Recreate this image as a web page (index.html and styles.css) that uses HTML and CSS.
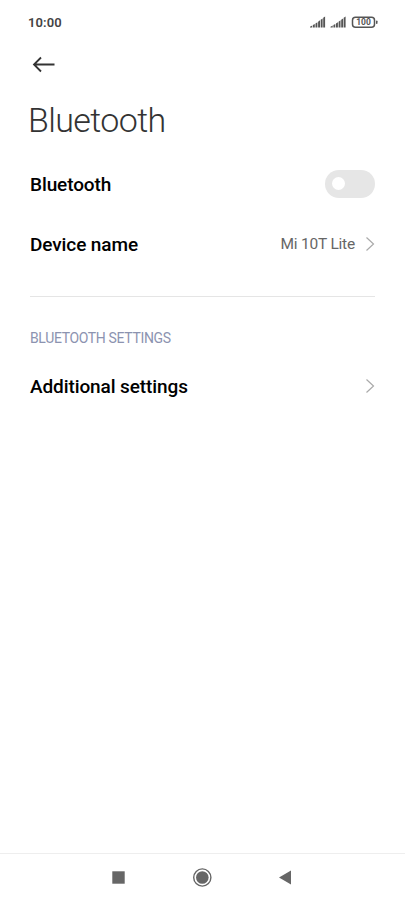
FILE: index.html
```html
<!DOCTYPE html>
<html lang="en">
<head>
<meta charset="utf-8">
<title>Bluetooth</title>
<link rel="stylesheet" href="styles.css">
</head>
<body>
<header class="status">
  <span class="time">10:00</span>
  <svg class="indicators" width="70" height="14" viewBox="0 0 70 14">
    <g fill="#555">
      <path d="M1 12.500v-.7l2.200-1.300v2zM3.900 10.100l1.900-1.100v3.500H3.900zM6.500 8.500l1.900-1.300v5.300H6.500zM9.100 6.700 11 5.300v7.200H9.100zM11.700 4.800l1.900-1.400v9.100h-1.900zM14.200 2.800l1.900-1.300v11h-1.900z"/>
      <path transform="translate(20.500)" d="M1 12.500v-.7l2.200-1.300v2zM3.900 10.100l1.900-1.100v3.500H3.900zM6.500 8.500l1.900-1.300v5.300H6.500zM9.100 6.700 11 5.300v7.200H9.100zM11.700 4.800l1.900-1.400v9.100h-1.900zM14.200 2.800l1.900-1.300v11h-1.900z"/>
      <rect x="67" y="5.500" width="1.500" height="3.500" rx=".7"/>
    </g>
    <rect x="43.500" y="2.200" width="22" height="10.100" rx="3" fill="none" stroke="#555" stroke-width="1.500"/>
    <text class="level" x="54.500" y="10.400" text-anchor="middle">100</text>
  </svg>
</header>
<nav class="toolbar">
  <svg width="24" height="18" viewBox="0 0 24 18" fill="none" stroke="#333" stroke-width="1.800"><path d="M2 9.500H22.500M9 2.500 2 9.500 9 16.500"/></svg>
</nav>
<main class="content">
  <h1 class="title">Bluetooth</h1>
  <section class="group">
    <div class="row"><span class="label">Bluetooth</span><span class="switch"></span></div>
    <div class="row"><span class="label">Device name</span><span class="value">Mi 10T Lite</span>
      <svg class="chevron" width="10" height="16" viewBox="0 0 10 16"><path d="M1.500 1.500 8.500 8l-7 6.500"/></svg></div>
  </section>
  <section class="group settings">
    <h2 class="heading">BLUETOOTH SETTINGS</h2>
    <div class="row"><span class="label">Additional settings</span>
      <svg class="chevron" width="10" height="16" viewBox="0 0 10 16"><path d="M1.500 1.500 8.500 8l-7 6.500"/></svg></div>
  </section>
</main>
<footer class="navbar">
  <svg width="405" height="48" viewBox="0 0 405 48" fill="#666">
    <rect x="112.300" y="17.300" width="12.400" height="12.400"/>
    <circle cx="202.300" cy="23.500" r="6.300"/>
    <circle cx="202.300" cy="23.500" r="8.600" fill="none" stroke="#666" stroke-width="1.400"/>
    <path d="M279 23.500 291 16.500v14z"/>
  </svg>
</footer>
</body>
</html>
```
FILE: styles.css
```css
* { box-sizing: border-box; }
body {
  margin: 0;
  height: 902px;
  display: flex;
  flex-direction: column;
  background: #fff;
  color: #000;
  font-family: Roboto, sans-serif;
}
.status {
  height: 44px;
  padding: 0 26px 0 28px;
  display: flex;
  align-items: center;
  justify-content: space-between;
}
.time { font-size: 13px; font-weight: 600; color: #444; letter-spacing: .1px; }
.level { font: 700 8.500px Roboto, sans-serif; fill: #555; }
.toolbar { height: 40px; padding: 0 32px; display: flex; align-items: center; }
.content { flex: 1; padding: 0 30px; }
.title { margin: 14px 0 10.600px -2px; font-size: 34px; line-height: 45px; font-weight: 300; color: #333; letter-spacing: -.6px; }
.row { height: 60px; display: flex; align-items: center; }
.label { flex: 1; padding-top: 1px; font-size: 19px; font-weight: 500; letter-spacing: -.1px; }
.switch { width: 50px; height: 28px; padding: 7.500px 7px; border-radius: 14px; background: #e6e6e6; }
.switch::before { content: ""; display: block; width: 13px; height: 13px; border-radius: 50%; background: #fff; }
.value { padding-top: 1px; font-size: 15.500px; color: #666; margin-right: 10px; letter-spacing: -.2px; }
.chevron { fill: none; stroke: #aaa; stroke-width: 1.200; }
.settings { margin-top: 22.400px; border-top: 1px solid #e5e5e5; padding-top: 29px; }
.heading { margin: 0; font-size: 14px; line-height: 24px; font-weight: 400; color: #8c93b0; letter-spacing: -.35px; }
.settings .row { height: 72px; }
.navbar { height: 49px; border-top: 1px solid #eee; }
.navbar svg { display: block; }
```
